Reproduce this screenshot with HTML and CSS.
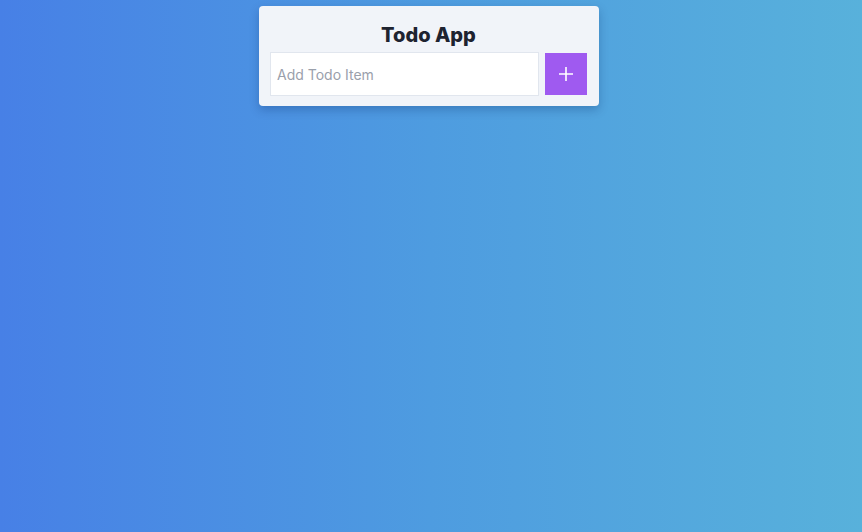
FILE: index.html
```html
<!DOCTYPE html>
<html>
<head>
<meta charset="utf-8">
<link rel="stylesheet" href="styles.css">
</head>
<body>
<main class="page">
  <section class="card">
    <h1 class="title">Todo App</h1>
    <form class="row">
      <input class="field" type="text" placeholder="Add Todo Item">
      <button class="add" type="button" aria-label="Add">
        <svg width="16" height="16" viewBox="0 0 16 16"><path d="M8 1v14M1 8h14" stroke="#fff" stroke-width="1.6" fill="none"/></svg>
      </button>
    </form>
  </section>
</main>
</body>
</html>
```
FILE: styles.css
```css
html, body { margin: 0; height: 100%; }
body {
  font-family: Inter, "Noto Sans", sans-serif;
  background: linear-gradient(90deg, #4780e6 0%, #4e9ce0 50%, #58b1db 100%);
}
.page {
  display: flex;
  justify-content: center;
  padding: 6px 4px 0 0;
}
.card {
  width: 340px;
  box-sizing: border-box;
  background: #f1f4f9;
  border-radius: 4px;
  padding: 15px 12px 10px 11px;
  box-shadow: 0 4px 10px rgba(0, 30, 90, 0.25);
}
.title {
  margin: 0 0 3px;
  text-align: center;
  font-size: 20px;
  line-height: 28px;
  font-weight: 800;
  color: #1e2330;
}
.row {
  display: flex;
  align-items: center;
  gap: 6px;
  margin: 0;
}
.field {
  flex: 1;
  height: 44px;
  box-sizing: border-box;
  border: 1px solid #e1e6ee;
  background: #fff;
  padding: 0 6px;
  font-family: inherit;
  font-size: 14px;
  color: #333;
  outline: none;
}
.field::placeholder { color: #9aa0ab; }
.add {
  width: 42px;
  height: 42px;
  border: none;
  background: #9f5af0;
  display: flex;
  align-items: center;
  justify-content: center;
  padding: 0;
}
```
